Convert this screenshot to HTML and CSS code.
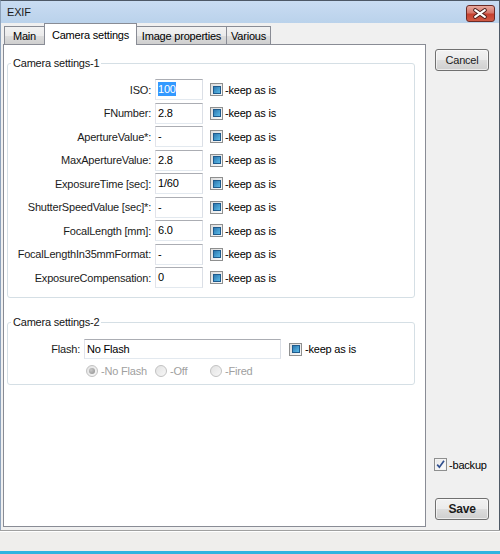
FILE: index.html
```html
<!DOCTYPE html>
<html>
<head>
<meta charset="utf-8">
<title>EXIF</title>
<link rel="stylesheet" href="styles.css">
</head>
<body>
<div class="window">
  <div class="titlebar">
    <span class="title">EXIF</span>
    <div class="close">
      <svg width="29" height="17" viewBox="0 0 29 17">
        <path d="M9.5 5 L19.5 12 M19.5 5 L9.5 12" stroke="#4a1d1a" stroke-width="4.2" stroke-linecap="round" fill="none"/>
        <path d="M9.5 5 L19.5 12 M19.5 5 L9.5 12" stroke="#ffffff" stroke-width="2.2" stroke-linecap="round" fill="none"/>
      </svg>
    </div>
  </div>
  <div class="client">
    <div class="main">
      <div class="tabs">
        <div class="tab t-main">Main</div>
        <div class="tab t-cam selected">Camera settings</div>
        <div class="tab t-img">Image properties</div>
        <div class="tab t-var">Various</div>
      </div>
      <div class="panel">
        <fieldset class="group g1">
          <legend>Camera settings-1</legend>
          <div class="rows rows1">
            <div class="lbl">ISO:</div><div class="inp"><span class="sel">100</span></div><div class="chk"><span class="cb"><span class="cb-in"></span></span>-keep as is</div>
            <div class="lbl">FNumber:</div><div class="inp">2.8</div><div class="chk"><span class="cb"><span class="cb-in"></span></span>-keep as is</div>
            <div class="lbl">ApertureValue*:</div><div class="inp">-</div><div class="chk"><span class="cb"><span class="cb-in"></span></span>-keep as is</div>
            <div class="lbl">MaxApertureValue:</div><div class="inp">2.8</div><div class="chk"><span class="cb"><span class="cb-in"></span></span>-keep as is</div>
            <div class="lbl">ExposureTime [sec]:</div><div class="inp">1/60</div><div class="chk"><span class="cb"><span class="cb-in"></span></span>-keep as is</div>
            <div class="lbl">ShutterSpeedValue [sec]*:</div><div class="inp">-</div><div class="chk"><span class="cb"><span class="cb-in"></span></span>-keep as is</div>
            <div class="lbl">FocalLength [mm]:</div><div class="inp">6.0</div><div class="chk"><span class="cb"><span class="cb-in"></span></span>-keep as is</div>
            <div class="lbl">FocalLengthIn35mmFormat:</div><div class="inp">-</div><div class="chk"><span class="cb"><span class="cb-in"></span></span>-keep as is</div>
            <div class="lbl">ExposureCompensation:</div><div class="inp">0</div><div class="chk"><span class="cb"><span class="cb-in"></span></span>-keep as is</div>
          </div>
        </fieldset>
        <fieldset class="group g2">
          <legend>Camera settings-2</legend>
          <div class="rows rows2">
            <div class="lbl">Flash:</div><div class="inp inp-wide">No Flash</div><div class="chk chk2"><span class="cb"><span class="cb-in"></span></span>-keep as is</div>
            <div class="radios">
              <div class="radio r1"><span class="rb checked"></span>-No Flash</div>
              <div class="radio r2"><span class="rb"></span>-Off</div>
              <div class="radio r3"><span class="rb"></span>-Fired</div>
            </div>
          </div>
        </fieldset>
      </div>
    </div>
    <div class="side">
      <div class="btn">Cancel</div>
      <div class="backup">
        <svg class="cbx" width="13" height="13" viewBox="0 0 13 13">
          <defs>
            <linearGradient id="cg" x1="0" y1="0" x2="1" y2="1">
              <stop offset="0" stop-color="#e6e6e6"/>
              <stop offset="1" stop-color="#ffffff"/>
            </linearGradient>
          </defs>
          <rect x="0.5" y="0.5" width="12" height="12" fill="url(#cg)" stroke="#8e8f8f"/>
          <rect x="1.5" y="1.5" width="10" height="10" fill="none" stroke="#f4f4f4"/>
          <path d="M3.2 6.6 L5.4 9.2 L10 2.8" stroke="#31508f" stroke-width="1.7" fill="none"/>
        </svg>
        <span>-backup</span>
      </div>
      <div class="btn save">Save</div>
    </div>
  </div>
  <div class="statusbar"></div>
</div>
</body>
</html>
```
FILE: styles.css
```css
* { box-sizing: border-box; }

body {
  margin: 0;
  font-family: "Liberation Sans", Arial, sans-serif;
  font-size: 11px;
  letter-spacing: -0.2px;
  color: #000;
}

.window {
  width: 500px;
  height: 554px;
  display: flex;
  flex-direction: column;
  background: #f0f0f0;
  border-top: 1px solid #4d5866;
  border-left: 1px solid #8ea3bc;
  border-right: 1px solid #4f5966;
}

.titlebar {
  height: 22px;
  flex: none;
  display: flex;
  align-items: center;
  justify-content: space-between;
  padding: 0 4px 0 6px;
  background: linear-gradient(#c9dcf2, #bad2eb);
}

.title {
  font-size: 11px;
  color: #1b1b1b;
}

.close {
  width: 29px;
  height: 17px;
  margin-top: 2px;
  border: 1px solid #6b2b26;
  border-radius: 3px;
  background: linear-gradient(#e8a99e 0%, #d6776b 45%, #c6402f 55%, #d05a45 100%);
  display: flex;
  overflow: hidden;
}
.close svg { margin: -1px 0 0 -1px; }

.client {
  flex: 1;
  display: flex;
}

.main {
  display: flex;
  flex-direction: column;
  margin-left: 2px;
  margin-bottom: 3px;
}

.tabs {
  height: 21px;
  display: flex;
  align-items: flex-end;
}

.tab {
  position: relative;
  height: 18px;
  border: 1px solid #898c95;
  border-bottom: none;
  margin-left: -1px;
  display: flex;
  align-items: center;
  justify-content: center;
  background: linear-gradient(#f2f2f2 0%, #ebebeb 50%, #dddddd 51%, #cfcfcf 100%);
  white-space: nowrap;
}
.t-main { width: 41px; margin-left: 1px; }
.t-cam { width: 93px; }
.t-img { width: 91px; }
.t-var { width: 45px; }

.tab.selected {
  height: 22px;
  margin-bottom: -1px;
  z-index: 1;
  background: #fff;
}

.panel {
  width: 423px;
  height: 483px;
  border: 1px solid #898c95;
  background: #fff;
  padding: 0 10px 0 3px;
}

.group {
  margin: 11px 0 0;
  padding: 9px 0 9px 0;
  border: 1px solid #d5dfe5;
  border-radius: 3px;
  min-width: 0;
}
.group legend {
  margin-left: 3px;
  padding: 0 2px;
  line-height: 14px;
  color: #151515;
}
.g2 {
  margin-top: 17px;
  padding-top: 10px;
  padding-bottom: 6px;
}

.rows {
  display: grid;
  column-gap: 4px;
  align-items: center;
}
.rows1 {
  grid-template-columns: 143px 48px auto;
  row-gap: 2.5px;
}
.rows2 {
  grid-template-columns: 72px 197px auto;
  row-gap: 5px;
}

.lbl {
  text-align: right;
  white-space: nowrap;
  color: #1b1b1b;
}

.inp {
  height: 21px;
  line-height: 19px;
  padding-left: 2px;
  background: #fff;
  border: 1px solid;
  border-color: #abadb3 #dbdfe6 #e3e9ef #e2e3ea;
  white-space: nowrap;
  overflow: hidden;
}
.inp-wide { height: 20px; line-height: 18px; }

.sel {
  background: #3399ff;
  color: #fff;
  padding: 1px 0;
}

.chk {
  display: flex;
  align-items: center;
  gap: 2px;
  margin-left: 3px;
  white-space: nowrap;
}
.chk2 { margin-left: 4px; gap: 3px; }

.cb {
  width: 13px;
  height: 13px;
  border: 1px solid #8e8f8f;
  background: linear-gradient(135deg, #dcdcdc, #fafafa);
  display: grid;
  place-items: center;
  flex: none;
}
.cb-in {
  width: 8px;
  height: 8px;
  border: 1px solid #1f5b8c;
  background: linear-gradient(135deg, #2d78b0, #5bbbe8);
}

.radios {
  grid-column: 2 / 4;
  display: flex;
  height: 14px;
  align-items: center;
  margin-left: 2px;
  color: #a0a0a0;
}
.radio {
  display: flex;
  align-items: center;
  gap: 3px;
  white-space: nowrap;
}
.r1 { width: 69px; }
.r2 { width: 55px; }

.rb {
  width: 12px;
  height: 12px;
  border-radius: 50%;
  border: 1px solid #c2c2c2;
  background: linear-gradient(135deg, #e2e2e2, #f7f7f7);
  display: grid;
  place-items: center;
  flex: none;
}
.rb.checked::after {
  content: "";
  width: 6px;
  height: 6px;
  border-radius: 50%;
  background: radial-gradient(circle at 35% 35%, #c8c8c8, #8d8d8d);
}

.side {
  flex: 1;
  display: flex;
  flex-direction: column;
  padding: 26px 0 10px 9px;
}

.btn {
  width: 54px;
  height: 22px;
  border: 1px solid #707070;
  border-radius: 3px;
  background: linear-gradient(#f2f2f2 0%, #ebebeb 50%, #dddddd 51%, #cfcfcf 100%);
  box-shadow: inset 0 0 0 1px rgba(255,255,255,0.6);
  display: flex;
  align-items: center;
  justify-content: center;
  color: #1b1b1b;
}
.btn.save {
  font-weight: bold;
  font-size: 12px;
}

.backup {
  margin-top: auto;
  margin-bottom: 27px;
  margin-left: -1px;
  display: flex;
  align-items: center;
  gap: 2px;
  white-space: nowrap;
}
.cbx { flex: none; }

.statusbar {
  height: 24px;
  flex: none;
  margin-left: -1px;
  margin-right: -1px;
  border-top: 1px solid #a0a0a0;
  box-shadow: inset 0 1px 0 #ffffff;
  background: #efeeec;
  border-bottom: 3px solid #2fb4e0;
}
```
